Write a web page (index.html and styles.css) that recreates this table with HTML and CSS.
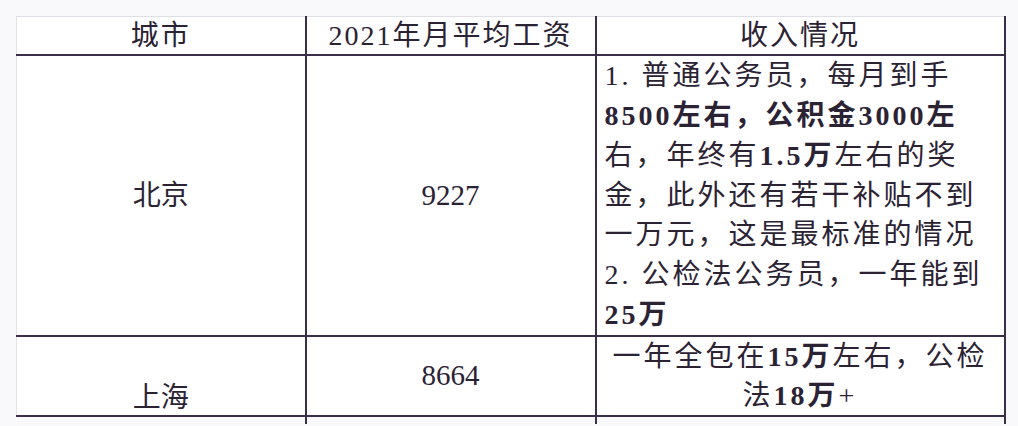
FILE: index.html
```html
<!DOCTYPE html>
<html lang="zh">
<head>
<meta charset="utf-8">
<link rel="stylesheet" href="styles.css">
</head>
<body>
<table class="salary">
  <colgroup>
    <col class="c1"><col class="c2"><col class="c3">
  </colgroup>
  <thead>
    <tr>
      <th class="first">城市</th>
      <th>2021年月平均工资</th>
      <th class="last">收入情况</th>
    </tr>
  </thead>
  <tbody>
    <tr class="bj">
      <td class="first city">北京</td>
      <td class="num">9227</td>
      <td class="last desc">1. 普通公务员，每月到手<br><b>8500左右，公积金3000左</b><br>右，年终有<b>1.5万</b>左右的奖<br>金，此外还有若干补贴不到<br>一万元，这是最标准的情况<br>2. 公检法公务员，一年能到<br><b>25万</b></td>
    </tr>
    <tr class="sh">
      <td class="first city bottom">上海</td>
      <td class="num">8664</td>
      <td class="last desc center">一年全包在<b>15万</b>左右，公检<br>法<b>18万</b>+</td>
    </tr>
    <tr class="tail">
      <td class="first"></td>
      <td></td>
      <td class="last"></td>
    </tr>
  </tbody>
</table>
</body>
</html>
```

FILE: styles.css
```css
html, body {
  margin: 0;
  padding: 0;
}
body {
  background: #f9f9fb;
  width: 1018px;
  height: 426px;
  overflow: hidden;
  padding-top: 16px;
  padding-left: 16px;
  box-sizing: border-box;
  font-family: "Liberation Serif", "Noto Sans CJK SC", serif;
  color: #2b2234;
}
.salary {
  border-collapse: collapse;
  table-layout: fixed;
  width: 988px;
  background: #fff;
}
.c1 { width: 289px; }
.c2 { width: 290px; }
.c3 { width: 409px; }

.salary th,
.salary td {
  padding: 0;
  border-left: 2px solid #3a2f4a;
  border-right: 2px solid #3a2f4a;
  border-bottom: 2px solid #3a2f4a;
  font-size: 28px;
  line-height: 39.85px;
  white-space: nowrap;
  vertical-align: middle;
  text-align: center;
}
.salary th {
  font-weight: normal;
  height: 37px;
  line-height: 37px;
  border-top: 1px solid #dfdfe6;
  letter-spacing: 2px;
}
.salary .first {
  border-left: 1px solid #e2e2e8;
}
.salary .num {
  font-size: 29px;
}
.salary .desc {
  text-align: left;
  padding: 0 4px 0 8px;
  letter-spacing: 3px;
}
.salary .sh td {
  line-height: 39px;
}
.salary .desc.center {
  text-align: center;
  padding: 0;
}
.desc b {
  font-weight: bold;
}
.salary .sh .city.bottom {
  vertical-align: bottom;
  line-height: 35px;
}
.salary .tail td {
  height: 7px;
  line-height: 7px;
  border-bottom: none;
  background: #f9f9fb;
}
.salary .tail td.first {
  border-left: none;
}
```
